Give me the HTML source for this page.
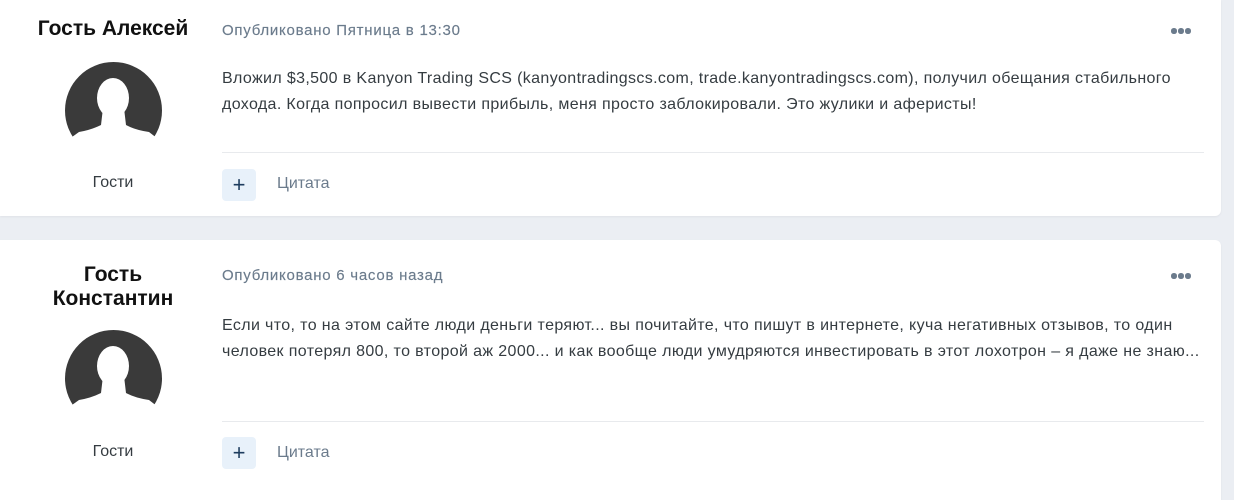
<!DOCTYPE html>
<html><head><meta charset="utf-8"><style>
body{margin:0;width:1234px;height:479px;background:#ebeef3;font-family:"Liberation Sans",sans-serif;overflow:hidden;position:relative}
.card{position:absolute;left:0;width:1221px;background:#fff;border-radius:0 0 6px 0;box-shadow:0 1px 2px rgba(0,0,0,.05)}
.name{position:absolute;left:13px;width:200px;text-align:center;font-weight:bold;font-size:21px;color:#111;line-height:24px}
.grp{position:absolute;left:20px;width:186px;text-align:center;font-size:16px;color:#353c41}
.av{position:absolute;left:65px}
.meta{position:absolute;left:222px;font-size:15px;color:#6b7b8c;letter-spacing:0.75px;-webkit-text-stroke:0.15px #6b7b8c}
.dots{position:absolute;left:1171px;width:20px;height:6px}
.dots i{position:absolute;top:0;width:5.5px;height:5.5px;border-radius:50%;background:#6b7b8c}
.txt{position:absolute;left:222px;white-space:nowrap;font-size:16px;line-height:26px;color:#353c41}
.hr{position:absolute;left:222px;width:982px;height:1px;background:#e8eaed}
.plus{position:absolute;left:222px;width:34px;height:32px;border-radius:4px;background:#e8f1fa;color:#1d3c5e;font-size:22px;text-align:center;line-height:31px}
.q{position:absolute;left:277px;font-size:16px;color:#6b7b8c}
</style></head><body>
<div class="card" style="top:0;height:216px">
<div class="name" style="top:17px">Гость Алексей</div>
<svg class="av" style="top:62px" width="97" height="95" viewBox="0 0 97 95"><circle cx="48.5" cy="48.5" r="48.5" fill="#3a3a3a"/><ellipse cx="48" cy="36" rx="16" ry="20" fill="#fff"/><path d="M38 46 L36 63 Q26 68 14 70 L0 80 L0 95 L97 95 L97 80 L84 70 Q70 68 61 63 L59 46 Z" fill="#fff"/></svg>
<div class="grp" style="top:174px">Гости</div>
<div class="meta" style="top:22px">Опубликовано Пятница в 13:30</div>
<div class="dots" style="top:28px"><i style="left:0"></i><i style="left:7px"></i><i style="left:14px"></i></div>
<div class="txt" style="top:66px;letter-spacing:0.36px">Вложил $3,500 в Kanyon Trading SCS (kanyontradingscs.com, trade.kanyontradingscs.com), получил обещания стабильного<br>дохода. Когда попросил вывести прибыль, меня просто заблокировали. Это жулики и аферисты!</div>
<div class="hr" style="top:152px"></div>
<div class="plus" style="top:169px">+</div>
<div class="q" style="top:175px">Цитата</div>
</div>
<div class="card" style="top:240px;height:260px;border-radius:0 6px 0 0">
<div class="name" style="top:23px">Гость<br>Константин</div>
<svg class="av" style="top:90px" width="97" height="95" viewBox="0 0 97 95"><circle cx="48.5" cy="48.5" r="48.5" fill="#3a3a3a"/><ellipse cx="48" cy="36" rx="16" ry="20" fill="#fff"/><path d="M38 46 L36 63 Q26 68 14 70 L0 80 L0 95 L97 95 L97 80 L84 70 Q70 68 61 63 L59 46 Z" fill="#fff"/></svg>
<div class="grp" style="top:203px">Гости</div>
<div class="meta" style="top:27px">Опубликовано 6 часов назад</div>
<div class="dots" style="top:33px"><i style="left:0"></i><i style="left:7px"></i><i style="left:14px"></i></div>
<div class="txt" style="top:73px;letter-spacing:0.37px">Если что, то на этом сайте люди деньги теряют... вы почитайте, что пишут в интернете, куча негативных отзывов, то один<br>человек потерял 800, то второй аж 2000... и как вообще люди умудряются инвестировать в этот лохотрон – я даже не знаю...</div>
<div class="hr" style="top:181px"></div>
<div class="plus" style="top:197px">+</div>
<div class="q" style="top:204px">Цитата</div>
</div>
</body></html>
